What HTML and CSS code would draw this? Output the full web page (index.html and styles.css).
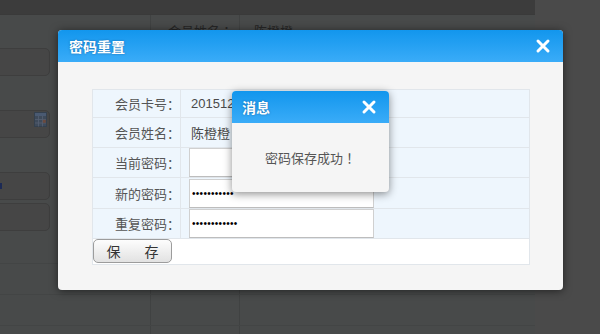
FILE: index.html
```html
<!DOCTYPE html>
<html lang="zh-CN">
<head>
    <meta charset="UTF-8">
    <title>密码重置</title>
    <link rel="stylesheet" href="styles.css">
</head>
<body>
    <div class="page">
        <div class="topbar"></div>
        <div class="bg-row">
            <div class="bg-cell"></div>
            <div class="bg-cell bg-label">会员姓名<span class="punct">：</span></div>
            <div class="bg-cell bg-value">陈橙橙</div>
        </div>
        <div class="bg-row">
            <div class="bg-cell"><span class="bg-box"></span></div>
            <div class="bg-cell"></div>
            <div class="bg-cell"></div>
        </div>
        <div class="bg-row">
            <div class="bg-cell"></div>
            <div class="bg-cell"></div>
            <div class="bg-cell"></div>
        </div>
        <div class="bg-row">
            <div class="bg-cell">
                <span class="bg-box">
                    <svg class="cal" width="13" height="15" viewBox="0 0 13 15">
                        <rect x="0.5" y="0.5" width="12" height="14" fill="#3e4a5a" stroke="#34404e"/>
                        <rect x="1" y="1" width="11" height="3" fill="#4a5a72"/>
                        <path d="M1 7.5h11M1 11h11M4.5 4v10.5M8.5 4v10.5" stroke="#556072" stroke-width="0.8"/>
                        <rect x="8.8" y="7.8" width="3" height="3" fill="#6b4a3e"/>
                    </svg>
                </span>
            </div>
            <div class="bg-cell"></div>
            <div class="bg-cell"></div>
        </div>
        <div class="bg-row">
            <div class="bg-cell"></div>
            <div class="bg-cell"></div>
            <div class="bg-cell"></div>
        </div>
        <div class="bg-row">
            <div class="bg-cell"><span class="bg-mark"></span><span class="bg-box"></span></div>
            <div class="bg-cell"></div>
            <div class="bg-cell"></div>
        </div>
        <div class="bg-row">
            <div class="bg-cell"><span class="bg-box"></span></div>
            <div class="bg-cell"></div>
            <div class="bg-cell"></div>
        </div>
        <div class="bg-row">
            <div class="bg-cell"></div>
            <div class="bg-cell"></div>
            <div class="bg-cell"></div>
        </div>
        <div class="bg-row lined">
            <div class="bg-cell"></div>
            <div class="bg-cell"></div>
            <div class="bg-cell"></div>
        </div>
        <div class="bg-row lined">
            <div class="bg-cell"></div>
            <div class="bg-cell"></div>
            <div class="bg-cell"></div>
        </div>
        <div class="bg-row lined last">
            <div class="bg-cell"></div>
            <div class="bg-cell bg-label">公债<span class="punct">：</span></div>
            <div class="bg-cell"></div>
        </div>
    </div>

    <div class="dialog">
        <div class="dialog-head">
            <span class="dialog-title">密码重置</span>
            <svg class="close" width="16" height="16" viewBox="0 0 16 16">
                <path d="M3 3L13 13M13 3L3 13" stroke="#fff" stroke-width="3" stroke-linecap="round"/>
            </svg>
        </div>
        <div class="dialog-body">
            <table class="form-table">
                <tr class="r1">
                    <td class="label">会员卡号<span class="punct">：</span></td>
                    <td class="value">201512080001</td>
                </tr>
                <tr class="r2">
                    <td class="label">会员姓名<span class="punct">：</span></td>
                    <td class="value">陈橙橙</td>
                </tr>
                <tr class="r3">
                    <td class="label">当前密码<span class="punct">：</span></td>
                    <td class="value"><input type="password" class="field" value=""></td>
                </tr>
                <tr class="r4">
                    <td class="label">新的密码<span class="punct">：</span></td>
                    <td class="value"><input type="password" class="field" value="12345678901"></td>
                </tr>
                <tr class="r5">
                    <td class="label">重复密码<span class="punct">：</span></td>
                    <td class="value"><input type="password" class="field" value="123456789012"></td>
                </tr>
                <tr class="r6">
                    <td colspan="2" class="actions">
                        <button type="button" class="save-btn"><span>保</span><span>存</span></button>
                    </td>
                </tr>
            </table>
        </div>
    </div>

    <div class="msg">
        <div class="msg-head">
            <span class="msg-title">消息</span>
            <svg class="close" width="16" height="16" viewBox="0 0 16 16">
                <path d="M3 3L13 13M13 3L3 13" stroke="#fff" stroke-width="3" stroke-linecap="round"/>
            </svg>
        </div>
        <div class="msg-body">密码保存成功<span class="punct">！</span></div>
    </div>
</body>
</html>
```

FILE: styles.css
```css
body {
    margin: 0;
    background: #4a4a4a;
    font-family: "Liberation Sans", "Noto Sans CJK SC", sans-serif;
    font-size: 13px;
    height: 334px;
    overflow: hidden;
}

/* full-width punctuation sits centred in its box, as on the original */
.punct {
    font-family: "Noto Sans CJK TC", "Noto Sans CJK SC", sans-serif;
}

/* dimmed page behind the dialog */
.page {
    width: 535px;
    height: 334px;
    background: #484a4a;
    overflow: hidden;
}

.topbar {
    height: 14px;
    background: #3c3c3c;
    border-bottom: 1px solid #3a3a3a;
}

.bg-row {
    display: grid;
    grid-template-columns: 151px 89px 1fr;
    height: 31px;
}

.bg-row.lined {
    border-top: 1px solid #434545;
    height: 30px;
}

.bg-row.last {
    height: 10px;
}

.bg-cell {
    border-right: 1px solid #404242;
    display: flex;
    align-items: center;
    position: relative;
    color: #262626;
}

.bg-cell:last-child {
    border-right: none;
}

.bg-label {
    justify-content: flex-end;
    padding-right: 6px;
}

.lined .bg-label {
    align-items: flex-start;
    padding-top: 4px;
}

.bg-value {
    padding-left: 14px;
}

.bg-box {
    display: flex;
    align-items: flex-start;
    justify-content: flex-end;
    margin-left: -10px;
    width: 60px;
    height: 28px;
    box-sizing: border-box;
    padding: 0 2px 0 0;
    background: #464646;
    border: 1px solid #3e3e3e;
    border-radius: 5px;
}

.cal {
    margin-top: 1px;
}

.bg-mark {
    position: absolute;
    left: 0;
    top: 13px;
    width: 2px;
    height: 6px;
    background: #1c2a55;
}

/* main dialog */
.dialog {
    position: absolute;
    left: 58px;
    top: 30px;
    width: 505px;
    height: 260px;
    background: #f5f5f5;
    border-radius: 4px;
    box-shadow: 0 1px 8px rgba(0, 0, 0, 0.55);
    overflow: hidden;
}

.dialog-head,
.msg-head {
    height: 32px;
    background: linear-gradient(#1296ed, #3aacf8);
    display: flex;
    align-items: center;
    justify-content: space-between;
    padding: 0 12px 0 11px;
}

.dialog-title,
.msg-title {
    color: #fff;
    font-weight: bold;
    font-size: 14px;
    text-shadow: 0 0 2px rgba(0, 40, 90, 0.5);
}

.dialog-body {
    padding: 27px 33px 0 34px;
}

.form-table {
    width: 438px;
    border-collapse: collapse;
    color: #555;
}

.form-table td {
    border: 1px solid #e1e6eb;
    padding: 0;
    background: #eef6fd;
}

.label {
    width: 87px;
    text-align: right;
}

.value {
    padding-left: 10px !important;
    color: #4a4a4a;
}

.r1 { height: 28px; }
.r2 { height: 30px; }
.r3 { height: 30px; }
.r4 { height: 31px; }
.r5 { height: 30px; }
.r6 { height: 26px; }

.form-table .actions {
    background: #fff;
    vertical-align: top;
}

.field {
    display: block;
    margin: 0 0 0 -2px;
    width: 185px;
    height: 29px;
    box-sizing: border-box;
    border: 1px solid #d0d0d0;
    border-bottom-color: #bdbdbd;
    background: #fff;
    padding: 0 2px;
    font-size: 10px;
    letter-spacing: 0.3px;
    color: #000;
    outline: none;
}

.save-btn {
    display: flex;
    gap: 24px;
    justify-content: center;
    align-items: center;
    width: 79px;
    height: 24px;
    margin: 0;
    padding: 0;
    border: 1px solid #9c9c9c;
    border-radius: 5px;
    background: linear-gradient(#fdfdfd, #e2e2e2);
    font-family: "Liberation Sans", "Noto Sans CJK SC", sans-serif;
    font-size: 14px;
    color: #333;
}

/* message popup */
.msg {
    position: absolute;
    left: 232px;
    top: 91px;
    width: 157px;
    height: 101px;
    background: #f5f5f5;
    border-radius: 4px;
    box-shadow: 0 2px 8px rgba(0, 0, 0, 0.45);
    overflow: hidden;
}

.msg-head {
    padding: 0 12px 0 10px;
}

.msg-body {
    height: 69px;
    display: flex;
    align-items: center;
    justify-content: center;
    color: #555;
}
```
